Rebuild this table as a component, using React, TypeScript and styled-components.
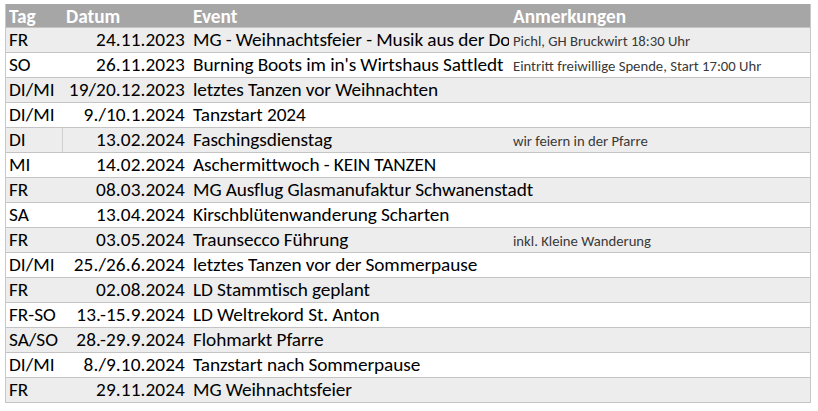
import React from "react";
import styled, { createGlobalStyle } from "styled-components";

const GlobalStyle = createGlobalStyle`
  html, body {
    margin: 0;
    padding: 0;
    background: #ffffff;
  }
`;

const Sheet = styled.div`
  padding: 4px 0 0 5px;
  font-family: "Carlito", "Lato", "Liberation Sans", sans-serif;
`;

const Table = styled.div`
  width: 806px;
  border-left: 1px solid #c8c8c8;
  border-right: 1px solid #c8c8c8;
  box-sizing: border-box;
`;

const Row = styled.div<{ $shade?: boolean; $head?: boolean }>`
  display: grid;
  grid-template-columns: 57px 127px 320px 1fr;
  height: ${p => (p.$head ? 24 : 25)}px;
  background: ${p => (p.$head ? "#a6a6a6" : p.$shade ? "#ededed" : "#ffffff")};
  border-bottom: 1px solid #c4c4c4;
  box-sizing: border-box;
`;

// Excel-like cell: text spills into the next column unless it is clipped
const Cell = styled.div<{ $right?: boolean; $line?: boolean; $spacing?: number; $spill?: boolean }>`
  height: 100%;
  display: flex;
  align-items: flex-end;
  justify-content: ${p => (p.$right ? "flex-end" : "flex-start")};
  padding: 0 4px 3px 3px;
  box-sizing: border-box;
  font-size: 19.3px;
  line-height: 1;
  letter-spacing: ${p => p.$spacing ?? 0}px;
  color: #000000;
  white-space: nowrap;
  overflow: ${p => (p.$spill ? "visible" : "hidden")};
  border-right: 1px solid ${p => (p.$line ? "#d0d0d0" : "transparent")};
`;

const HeadCell = styled(Cell)`
  color: #ffffff;
  font-weight: 700;
  padding-bottom: 1px;
`;

const Note = styled(Cell)`
  font-size: 14.7px;
  color: #383838;
  padding-bottom: 3px;
`;

type Entry = { tag: string; date: string; event: string; note?: string; line?: boolean };

const entries: Entry[] = [
  { tag: "FR", date: "24.11.2023", event: "MG - Weihnachtsfeier - Musik aus der Donau", note: "Pichl, GH Bruckwirt 18:30 Uhr" },
  { tag: "SO", date: "26.11.2023", event: "Burning Boots im in's Wirtshaus Sattledt", note: "Eintritt freiwillige Spende, Start 17:00 Uhr" },
  { tag: "DI/MI", date: "19/20.12.2023", event: "letztes Tanzen vor Weihnachten" },
  { tag: "DI/MI", date: "9./10.1.2024", event: "Tanzstart 2024" },
  { tag: "DI", date: "13.02.2024", event: "Faschingsdienstag", note: "wir feiern in der Pfarre", line: true },
  { tag: "MI", date: "14.02.2024", event: "Aschermittwoch - KEIN TANZEN" },
  { tag: "FR", date: "08.03.2024", event: "MG Ausflug Glasmanufaktur Schwanenstadt" },
  { tag: "SA", date: "13.04.2024", event: "Kirschblütenwanderung Scharten" },
  { tag: "FR", date: "03.05.2024", event: "Traunsecco Führung", note: "inkl. Kleine Wanderung" },
  { tag: "DI/MI", date: "25./26.6.2024", event: "letztes Tanzen vor der Sommerpause" },
  { tag: "FR", date: "02.08.2024", event: "LD Stammtisch geplant" },
  { tag: "FR-SO", date: "13.-15.9.2024", event: "LD Weltrekord St. Anton" },
  { tag: "SA/SO", date: "28.-29.9.2024", event: "Flohmarkt Pfarre" },
  { tag: "DI/MI", date: "8./9.10.2024", event: "Tanzstart nach Sommerpause" },
  { tag: "FR", date: "29.11.2024", event: "MG Weihnachtsfeier" },
];

export default function App() {
  return (
    <>
      <GlobalStyle />
      <Sheet>
        <Table>
          <Row $head>
            <HeadCell>Tag</HeadCell>
            <HeadCell>Datum</HeadCell>
            <HeadCell>Event</HeadCell>
            <HeadCell>Anmerkungen</HeadCell>
          </Row>
          {entries.map((e, i) => (
            <Row key={i} $shade={i % 2 === 0}>
              <Cell $line={e.line}>{e.tag}</Cell>
              <Cell $right $spacing={0.1}>{e.date}</Cell>
              <Cell $spacing={-0.1} $spill={!e.note}>{e.event}</Cell>
              <Note>{e.note}</Note>
            </Row>
          ))}
        </Table>
      </Sheet>
    </>
  );
}
